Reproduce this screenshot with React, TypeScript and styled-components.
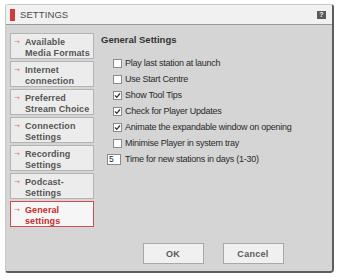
import React, { useState } from 'react';
import styled, { createGlobalStyle } from 'styled-components';

const GlobalStyle = createGlobalStyle`
  html, body {
    margin: 0;
    background: #ffffff;
  }
  body {
    font-family: 'Liberation Sans', Arial, sans-serif;
  }
`;

const Window = styled.div`
  box-sizing: border-box;
  margin: 4px 0 0 5px;
  width: 329px;
  height: 269px;
  display: flex;
  flex-direction: column;
  border: 1px solid #c8c8c8;
  border-right: 2px solid #5e5e5e;
  border-bottom: 2px solid #5e5e5e;
  border-radius: 3px 3px 4px 3px;
  overflow: hidden;
`;

const TitleBar = styled.div`
  height: 19px;
  display: flex;
  align-items: center;
  padding: 0 6px 0 4px;
  background: #f1f1f1;
  border-bottom: 1px solid #9a9a9a;
`;

const RedMark = styled.div`
  width: 5px;
  height: 12px;
  background: #d23a3a;
`;

const Title = styled.div`
  margin-left: 5px;
  font-size: 9.5px;
  letter-spacing: 0.1px;
  color: #4a4a4a;
`;

const HelpButton = styled.div`
  margin-left: auto;
  width: 9px;
  height: 8px;
  background: #5a5a5a;
  color: #f4f4f4;
  font-size: 7px;
  font-weight: bold;
  line-height: 8px;
  text-align: center;
`;

const Body = styled.div`
  flex: 1;
  display: flex;
  background: #d5d5d5;
  padding: 8px 0 7px 4px;
`;

const Nav = styled.div`
  width: 84px;
  display: flex;
  flex-direction: column;
  gap: 2px;
`;

const NavItem = styled.div<{ $active?: boolean }>`
  box-sizing: border-box;
  height: 26px;
  display: flex;
  padding: 3px 0 0 3px;
  background: ${({ $active }) => ($active ? '#f6f6f6' : '#ececec')};
  border: 1px solid ${({ $active }) => ($active ? '#d24d4d' : '#b4b4b4')};
  color: ${({ $active }) => ($active ? '#c52a2a' : '#555555')};
  font-size: 9px;
  font-weight: bold;
  line-height: 10.5px;
  letter-spacing: 0.1px;
`;

const Arrow = styled.span`
  width: 11px;
  flex: none;
  color: #e27676;
  font-size: 7px;
  font-weight: normal;
  font-family: 'DejaVu Sans', sans-serif;
`;

const Content = styled.div`
  flex: 1;
  display: flex;
  flex-direction: column;
  padding-left: 7px;
`;

const Heading = styled.div`
  margin-top: 1px;
  font-size: 9.5px;
  font-weight: bold;
  color: #333333;
`;

const Options = styled.div`
  margin-top: 13px;
  display: flex;
  flex-direction: column;
  gap: 6px;
`;

const Row = styled.label<{ $indent: number }>`
  height: 10px;
  display: flex;
  align-items: center;
  padding-left: ${({ $indent }) => $indent}px;
  font-size: 9px;
  color: #2a2a2a;
  letter-spacing: -0.25px;
`;

const Box = styled.span`
  box-sizing: border-box;
  width: 9px;
  height: 9px;
  margin-right: 3px;
  display: flex;
  align-items: center;
  justify-content: center;
  background: #ffffff;
  border: 1px solid #8a8a8a;
`;

const DaysInput = styled.span`
  box-sizing: border-box;
  width: 14px;
  height: 11px;
  margin-right: 4px;
  padding-left: 1px;
  background: #ffffff;
  border: 1px solid #8a8a8a;
  font-size: 8.5px;
  line-height: 9px;
`;

const Buttons = styled.div`
  margin-top: auto;
  display: flex;
  justify-content: center;
  gap: 19px;
  padding-right: 7px;
`;

const Button = styled.button`
  width: 61px;
  height: 21px;
  background: #f0f0f0;
  border: 1px solid #a8a8a8;
  font-family: 'Liberation Sans', Arial, sans-serif;
  font-size: 9px;
  font-weight: bold;
  color: #5a5a5a;
  letter-spacing: 0.3px;
`;

const Check = () => (
  <svg width="7" height="7" viewBox="0 0 7 7">
    <path d="M1 3.5 L2.8 5.3 L6 1.5" fill="none" stroke="#333" strokeWidth="1.2" />
  </svg>
);

const sections = [
  ['Available', 'Media Formats'],
  ['Internet', 'connection'],
  ['Preferred', 'Stream Choice'],
  ['Connection', 'Settings'],
  ['Recording', 'Settings'],
  ['Podcast-', 'Settings'],
  ['General', 'settings'],
];

const initialOptions = [
  { label: 'Play last station at launch', on: false },
  { label: 'Use Start Centre', on: false },
  { label: 'Show Tool Tips', on: true },
  { label: 'Check for Player Updates', on: true },
  { label: 'Animate the expandable window on opening', on: true },
  { label: 'Minimise Player in system tray', on: false },
];

export default function App() {
  const [options, setOptions] = useState(initialOptions);
  const active = sections.length - 1;

  const toggle = (i: number) =>
    setOptions(options.map((o, j) => (j === i ? { ...o, on: !o.on } : o)));

  return (
    <>
      <GlobalStyle />
      <Window>
        <TitleBar>
          <RedMark />
          <Title>SETTINGS</Title>
          <HelpButton>?</HelpButton>
        </TitleBar>
        <Body>
          <Nav>
            {sections.map((s, i) => (
              <NavItem key={i} $active={i === active}>
                <Arrow>→</Arrow>
                <div>
                  {s[0]}
                  <br />
                  {s[1]}
                </div>
              </NavItem>
            ))}
          </Nav>
          <Content>
            <Heading>General Settings</Heading>
            <Options>
              {options.map((o, i) => (
                <Row key={i} $indent={12} onClick={() => toggle(i)}>
                  <Box>{o.on && <Check />}</Box>
                  {o.label}
                </Row>
              ))}
              <Row $indent={6}>
                <DaysInput>5</DaysInput>
                Time for new stations in days (1-30)
              </Row>
            </Options>
            <Buttons>
              <Button>OK</Button>
              <Button>Cancel</Button>
            </Buttons>
          </Content>
        </Body>
      </Window>
    </>
  );
}
